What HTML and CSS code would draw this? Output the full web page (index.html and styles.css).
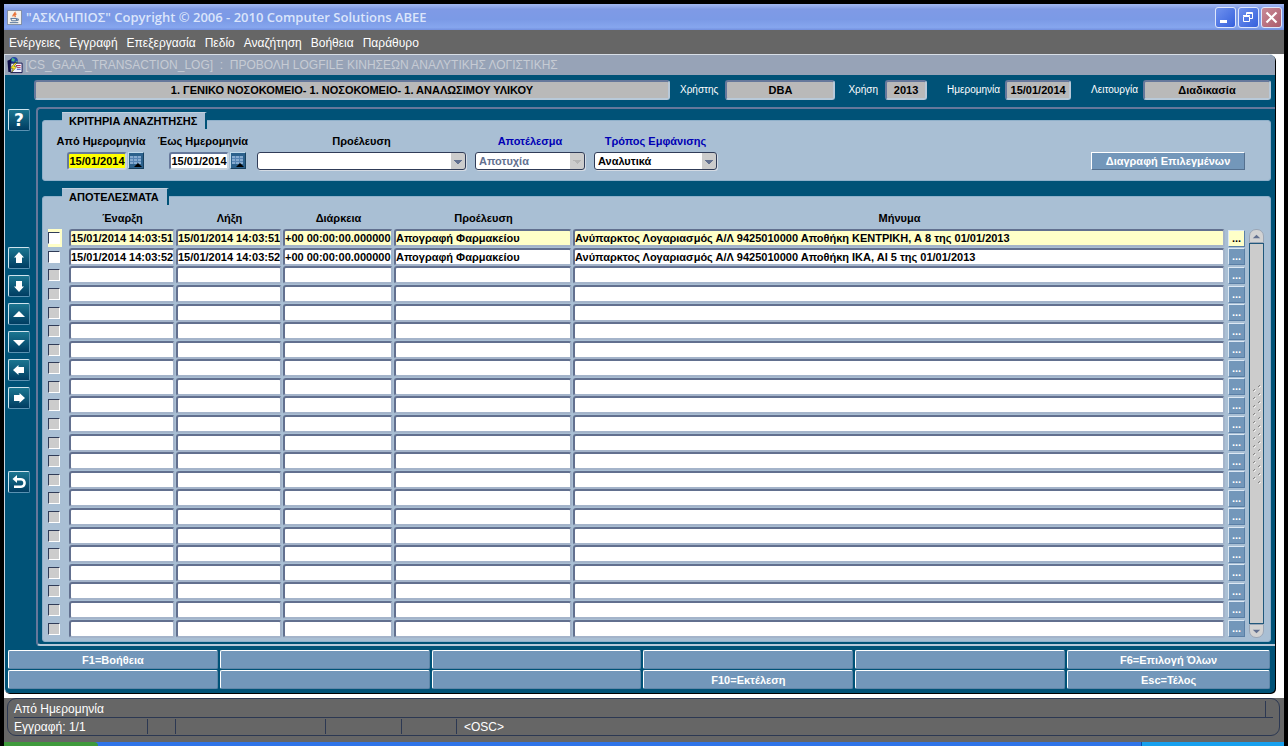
FILE: index.html
```
<!DOCTYPE html>
<html lang="el">
<head>
<meta charset="utf-8">
<title>ΑΣΚΛΗΠΙΟΣ</title>
<link rel="stylesheet" href="styles.css">
</head>
<body>
<div class="screen">
  <header class="titlebar">
    <svg class="app-icon" viewBox="0 0 16 16" aria-hidden="true">
      <rect width="16" height="16" rx="1" fill="#7d8aa0"/><rect x="1" y="1" width="14" height="14" fill="#f3f1ec"/>
      <path d="M8.500 2c1 2-3 2.600-2 5M10 4c-2 1-2 2-1 3.500" fill="none" stroke="#e8743a" stroke-width="1.500"/>
      <path d="M4 9h6v2.500H5zM10 9.500h2v1.500h-2" fill="none" stroke="#4d6d96"/><path d="M3 13.500h9" stroke="#4d6d96"/>
    </svg>
    <h1 class="title">"ΑΣΚΛΗΠΙΟΣ" Copyright © 2006 - 2010 Computer Solutions ΑΒΕΕ</h1>
    <div class="window-buttons">
      <button class="win-btn" aria-label="Minimize"><svg viewBox="0 0 19 19"><path d="M4 12h7v3H4z" fill="#fff"/></svg></button>
      <button class="win-btn" aria-label="Restore"><svg viewBox="0 0 19 19" fill="none" stroke="#fff"><path d="M4.500 8.500h6v5h-6zM4 7.500h7M7.500 7V4.500h6v6H11M7 5.500h7"/></svg></button>
      <button class="win-btn win-close" aria-label="Close"><svg viewBox="0 0 19 19"><path d="M4.500 4.500l10 10M14.500 4.500l-10 10" stroke="#fff" stroke-width="2.200"/></svg></button>
    </div>
  </header>
  <nav class="menubar">
    <button>Ενέργειες</button><button>Εγγραφή</button><button>Επεξεργασία</button><button>Πεδίο</button><button>Αναζήτηση</button><button>Βοήθεια</button><button>Παράθυρο</button>
  </nav>
  <div class="desk">
    <main class="form">
      <div class="form-title">
        <svg class="form-icon" viewBox="0 0 16 18" aria-hidden="true">
          <circle cx="7" cy="4" r="4" fill="#2448a8"/><path d="M5 1l3 1-1 3-3-1zM9 4l2 1-2 2z" fill="#49b884"/>
          <path d="M0 4l4-2v14H1z" fill="#10104a"/><path d="M3.500 6.500h12v10h-12z" fill="#f4f4ff" stroke="#10104a"/>
          <path d="M9 9h5M10 11h4" stroke="#b02850"/><path d="M10 13h4" stroke="#2840b0"/>
          <path d="M8 6L3 12h3l-2 5 6-7H7l3-4z" fill="#ffe820" stroke="#202020" stroke-width=".5"/>
        </svg>
        <h2 class="form-name">[CS_GAAA_TRANSACTION_LOG] &nbsp;:&nbsp; ΠΡΟΒΟΛΗ LOGFILE ΚΙΝΗΣΕΩΝ ΑΝΑΛΥΤΙΚΗΣ ΛΟΓΙΣΤΙΚΗΣ</h2>
      </div>
      <div class="context">
        <output class="ctx-box ctx-unit">1. ΓΕΝΙΚΟ ΝΟΣΟΚΟΜΕΙΟ- 1. ΝΟΣΟΚΟΜΕΙΟ- 1. ΑΝΑΛΩΣΙΜΟΥ ΥΛΙΚΟΥ</output>
        <label class="ctx-label" for="user">Χρήστης</label><output id="user" class="ctx-box ctx-user">DBA</output>
        <label class="ctx-label ctx-gap" for="year">Χρήση</label><output id="year" class="ctx-box ctx-year">2013</output>
        <label class="ctx-label ctx-gap-wide" for="date">Ημερομηνία</label><output id="date" class="ctx-box ctx-date">15/01/2014</output>
        <label class="ctx-label ctx-gap-wide" for="mode">Λειτουργία</label><output id="mode" class="ctx-box ctx-mode">Διαδικασία</output>
      </div>
      <div class="workspace">
        <aside class="rail">
          <button class="rail-btn rail-help" aria-label="Βοήθεια">?</button>
          <div class="rail-group">
            <button class="rail-btn" aria-label="Πρώτη"><svg viewBox="0 0 20 20"><path d="M10 4l5 5.500h-2V15H7V9.500H5z"/></svg></button>
            <button class="rail-btn" aria-label="Τελευταία"><svg viewBox="0 0 20 20"><path d="M10 16l5-5.500h-2V5H7v5.500H5z"/></svg></button>
            <button class="rail-btn" aria-label="Πάνω"><svg viewBox="0 0 20 20"><path d="M10 7l6 6H4z"/></svg></button>
            <button class="rail-btn" aria-label="Κάτω"><svg viewBox="0 0 20 20"><path d="M10 14l6-6H4z"/></svg></button>
            <button class="rail-btn" aria-label="Αριστερά"><svg viewBox="0 0 20 20"><path d="M4 10l5.500-5v2H15v6H9.500v2z"/></svg></button>
            <button class="rail-btn" aria-label="Δεξιά"><svg viewBox="0 0 20 20"><path d="M16 10l-5.500-5v2H5v6h5.500v2z"/></svg></button>
          </div>
          <button class="rail-btn" aria-label="Επιστροφή"><svg viewBox="0 0 20 20"><path d="M3.500 7L8 3v3h4c6.500 0 6.500 10 0 10H5v-2.500h7c3 0 3-5 0-5H8V11z"/></svg></button>
        </aside>
        <div class="canvas">
          <section class="panel criteria">
            <h3 class="tab tab-criteria">ΚΡΙΤΗΡΙΑ ΑΝΑΖΗΤΗΣΗΣ</h3>
            <div class="fields">
              <div class="field field-date"><label for="from">Από Ημερομηνία</label><div class="date-row"><input id="from" class="date active" value="15/01/2014"><button class="cal" aria-label="Ημερολόγιο"><svg viewBox="0 0 14 14"><path d="M1 2h11v8H1z" fill="#86abd0"/><path d="M1 4.500h11M1 7.500h11M4.500 2v8M8.500 2v8" stroke="#5684b4"/><path d="M5 13l4-4 4 4z" fill="#000"/></svg></button></div></div>
              <div class="field field-date"><label for="to">Έως Ημερομηνία</label><div class="date-row"><input id="to" class="date" value="15/01/2014"><button class="cal" aria-label="Ημερολόγιο"><svg viewBox="0 0 14 14"><path d="M1 2h11v8H1z" fill="#86abd0"/><path d="M1 4.500h11M1 7.500h11M4.500 2v8M8.500 2v8" stroke="#5684b4"/><path d="M5 13l4-4 4 4z" fill="#000"/></svg></button></div></div>
              <div class="field field-origin"><label for="origin">Προέλευση</label><select id="origin" class="combo"><option></option></select></div>
              <div class="field field-result"><label class="blue" for="result">Αποτέλεσμα</label><select id="result" class="combo" disabled><option>Αποτυχία</option></select></div>
              <div class="field field-view"><label class="blue" for="view">Τρόπος Εμφάνισης</label><select id="view" class="combo"><option>Αναλυτικά</option></select></div>
              <button class="delete">Διαγραφή Επιλεγμένων</button>
            </div>
          </section>
          <section class="panel results">
            <h3 class="tab tab-results">ΑΠΟΤΕΛΕΣΜΑΤΑ</h3>
            <div class="results-body">
              <table class="grid">
                <colgroup><col class="c-check"><col class="c-start"><col class="c-end"><col class="c-span"><col class="c-origin"><col><col class="c-more"></colgroup>
                <thead><tr><td></td><th>Έναρξη</th><th>Λήξη</th><th>Διάρκεια</th><th>Προέλευση</th><th>Μήνυμα</th><td></td></tr></thead>
                <tbody id="rows"></tbody>
              </table>
              <div class="scroll" aria-hidden="true">
                <span class="scroll-end scroll-up"><svg viewBox="0 0 14 13"><path d="M3 9l4-4 4 4z" fill="#62708f"/></svg></span>
                <span class="scroll-thumb"><svg class="grip" viewBox="0 0 8 100"><defs><pattern id="dash" width="8" height="8" patternUnits="userSpaceOnUse"><path d="M5 3l2-2M0 7l2-2" stroke="#858585"/><path d="M6 4l2-2M1 8l2-2" stroke="#f0f0f0"/></pattern></defs><rect width="8" height="100" fill="url(#dash)"/></svg></span>
                <span class="scroll-end scroll-down"><svg viewBox="0 0 14 13"><path d="M3 5l4 4 4-4z" fill="#62708f"/></svg></span>
              </div>
            </div>
          </section>
        </div>
      </div>
      <div class="keys">
        <button>F1=Βοήθεια</button><button></button><button></button><button></button><button></button><button>F6=Επιλογή Όλων</button>
        <button></button><button></button><button></button><button>F10=Εκτέλεση</button><button></button><button>Esc=Τέλος</button>
      </div>
    </main>
  </div>
  <footer class="status">
    <div class="status-box">
      <div class="status-line"><span class="hint">Από Ημερομηνία</span></div>
      <div class="status-cells"><span class="s-record">Εγγραφή: 1/1</span><span class="s-a"></span><span class="s-b"></span><span class="s-c"></span><span class="s-d"></span><span class="s-osc">&lt;OSC&gt;</span></div>
    </div>
  </footer>
  <div class="taskbar"><span class="start"></span><span class="tasks"></span><span class="tray"></span></div>
</div>
<script src="rows.js"></script>
</body>
</html>
```
FILE: styles.css
```
* { box-sizing: border-box; }
body { margin: 0; background: #000; font: bold 11px/14px "Liberation Sans", "DejaVu Sans", sans-serif; color: #000; }
h1, h2, h3 { margin: 0; font: inherit; }
button, input, select { font: inherit; margin: 0; padding: 0; border-radius: 0; }
svg { display: block; }
.screen { min-height: 100vh; padding: 4px 4px 0; display: flex; flex-direction: column; }

.titlebar { height: 26px; display: flex; align-items: center; gap: 4px; padding: 0 2px 0 3px; background: linear-gradient(#a3b9f2, #7f9ae6 20%, #7b9ae6 60%, #86a6ee 90%, #7390de); }
.app-icon { width: 15px; height: 15px; }
.title { flex: 1; color: #dbe5fb; font: 600 13px/18px "Open Sans", sans-serif; }
.window-buttons { display: flex; gap: 2px; }
.win-btn { width: 21px; height: 21px; border: 1px solid #dfe7fb; border-radius: 3px; background: linear-gradient(135deg, #7092ee, #3560dc); }
.win-btn svg { width: 19px; height: 19px; }
.win-close { background: linear-gradient(135deg, #c98a97, #ab5c6c); }

.menubar { height: 24px; display: flex; align-items: center; gap: 9px; padding: 2px 5px 0; background: #666; }
.menubar button { border: 0; background: none; color: #fff; font: 12px/16px "Liberation Sans", sans-serif; }

.desk { flex: 1; display: flex; background: #fff; padding: 0 9px 5px 0; }
.form { flex: 1; display: flex; flex-direction: column; background: #005277; border-left: 1px solid #c8d4e0; border-top: 1px solid #d8dee6; border-radius: 0 6px 5px 5px; box-shadow: 1px 1px 0 #000; min-width: 0; }
.form-title { height: 20px; display: flex; align-items: center; gap: 2px; padding-left: 2px; background: #97a3b7; border-radius: 0 5px 0 0; }
.form-icon { width: 16px; height: 17px; }
.form-name { color: #c6cbd4; font: 12px/16px "Liberation Sans", sans-serif; }

.context { display: flex; align-items: center; padding: 5px 4px 5px 29px; }
.ctx-box { height: 20px; border: 2px solid; border-color: #66789b #b8c9d9 #b8c9d9 #66789b; border-radius: 3px; background: #b9b9b9; text-align: center; line-height: 16px; }
.ctx-unit { flex: 1; }
.ctx-label { color: #fff; font-weight: normal; font-size: 10px; padding: 0 7px 0 10px; }
.ctx-gap { padding-left: 13px; }
.ctx-gap-wide { padding-left: 20px; padding-right: 5px; }
.ctx-user { width: 110px; }
.ctx-year { width: 42px; }
.ctx-date { width: 66px; }
.ctx-mode { width: 128px; }

.workspace { flex: 1; display: flex; min-height: 0; }
.rail { width: 31px; display: flex; flex-direction: column; padding: 4px 0 0 3px; }
.rail-btn { width: 22px; height: 22px; border: 1px solid; border-color: #cfe4ee #5a92b2 #5a92b2 #cfe4ee; border-radius: 2px; background: linear-gradient(#1b7590, #003d62); color: #fff; }
.rail-btn svg { width: 20px; height: 20px; fill: #fff; }
.rail-help { font-family: "DejaVu Sans", sans-serif; font-size: 17px; line-height: 20px; }
.rail-group { display: flex; flex-direction: column; gap: 6px; margin: 116px 0 62px; }
.canvas { flex: 1; min-width: 0; display: flex; flex-direction: column; gap: 15px; padding: 11px 4px 2px 4px; margin-top: 2px; border: 2px solid #66789b; border-right: 0; border-bottom-color: #b8c9d9; border-radius: 4px 0 0 4px; }
.panel { background: #a9bfd4; border-radius: 3px; border: 1px solid #8fb0ca; padding: 0 3px; }
.tab { width: max-content; margin: -9px 0 0 16px; padding: 1px 8px 0 7px; background: #a9bfd4; border-top: 1px solid #c3d0df; border-right: 2px solid #005277; line-height: 15px; }
.criteria { height: 61px; }
.fields { display: flex; align-items: flex-end; padding: 5px 0 0 4px; }
.field { display: flex; flex-direction: column; align-items: center; gap: 3px; }
.field label { line-height: 15px; }
.field .blue { color: #0000b4; }
.field-date { width: 102px; }
.date-row { display: flex; gap: 1px; padding-left: 9px; }
.date { width: 60px; height: 18px; border: 2px solid; border-color: #66789b #c8d4e0 #c8d4e0 #66789b; border-radius: 3px; background: #fff; text-align: center; outline: 0; }
.date.active { background: #ff0; }
.cal { width: 16px; height: 17px; border: 1px solid; border-color: #c4dcec #17405f #17405f #c4dcec; background: #2c618c; }
.cal svg { width: 14px; height: 14px; }
.combo { width: 100%; height: 18px; appearance: none; border: 1px solid #303c58; border-radius: 3px; box-shadow: 1px 1px 0 #d4dbe4; padding: 0 3px; color: #000; background: conic-gradient(from -45deg at 50% 100%, #62708f 90deg, transparent 0) no-repeat right 3px top 7px / 8px 4px, linear-gradient(#ccc, #ccc) no-repeat right / 14px 100%, #fff; background: linear-gradient(45deg, transparent 50%, #62708f 50%) no-repeat right 7px top 7px / 4px 4px, linear-gradient(-45deg, transparent 50%, #62708f 50%) no-repeat right 3px top 7px / 4px 4px, linear-gradient(#ccc, #ccc) no-repeat right / 14px 100%, #fff; }
.combo:disabled { color: #62708f; opacity: 1; background: linear-gradient(45deg, transparent 50%, #b4b4b4 50%) no-repeat right 7px top 7px / 4px 4px, linear-gradient(-45deg, transparent 50%, #b4b4b4 50%) no-repeat right 3px top 7px / 4px 4px, linear-gradient(#ccc, #ccc) no-repeat right / 14px 100%, #fff; }
.field-origin { width: 209px; margin-left: 3px; }
.field-result { width: 110px; margin-left: 9px; }
.field-view { width: 123px; margin-left: 9px; }
.delete { margin-left: auto; margin-right: 22px; width: 154px; height: 18px; color: #fff; background: #7397ba; border: 1px solid; border-color: #fff #55708f #55708f #fff; line-height: 14px; }

.results { flex: 1; display: flex; flex-direction: column; }
.results-body { flex: 1; display: flex; gap: 4px; padding: 4px 3px 3px 2px; }
.grid { flex: 1; table-layout: fixed; border-collapse: collapse; width: 100%; height: 429px; }
.grid th, .grid td { padding: 0; font: inherit; }
.grid thead tr { height: 20px; }
.grid thead th { padding-bottom: 2px; }
.c-check { width: 21px; }
.c-start, .c-end { width: 107px; }
.c-span { width: 111px; }
.c-origin { width: 179px; }
.c-more { width: 19px; }
.cell { display: block; width: calc(100% - 1px); height: 18px; border: 2px solid; border-color: #62708f #a4b4ca #a4b4ca #62708f; border-radius: 3px; background: #fff; padding: 0; outline: 0; }
.current .cell { background: #ffffc8; }
.pick { appearance: none; display: block; width: 12px; height: 12px; border: 1px solid; border-color: #303c58 #fff #fff #303c58; background: #ccc; }
.filled .pick { background: #fff; }
.pick-wrap { display: flex; align-items: center; width: 14px; height: 18px; }
.current .pick-wrap { background: #ffffc8; }
.more { display: block; width: 17px; height: 17px; margin-left: auto; border: 1px solid; border-color: #dce8f4 #5a7fa6 #5a7fa6 #dce8f4; background: #7397ba; color: #fff; line-height: 15px; }
.current .more { background: #ffffc8; color: #000; }
.scroll { width: 15px; margin-top: 20px; display: flex; flex-direction: column; }
.scroll-end { height: 14px; background: #d3d3d3; border: 1px solid #9aa6b6; }
.scroll-up { border-radius: 7px 7px 0 0; }
.scroll-down { border-radius: 0 0 7px 7px; }
.scroll-thumb { flex: 1; display: flex; align-items: center; justify-content: center; background: #ccc; border: 1px solid #21587c; }
.grip { width: 8px; height: 100px; }

.keys { display: grid; grid-template-columns: repeat(5, 210fr) 203fr; grid-auto-rows: 19px; gap: 1px 2px; padding: 4px 5px 4px 3px; }
.keys button { border: 1px solid; border-color: #fff #5f86a8 #5f86a8 #fff; border-radius: 2px; background: #7397ba; color: #fff; }

.status { background: #666; padding: 0 4px 6px 3px; color: #fff; font: 12px/16px "Liberation Sans", sans-serif; }
.status-box { border: 1px solid #2c3852; border-radius: 9px; padding: 0 6px; }
.status-line { height: 19px; display: flex; padding-top: 2px; border-bottom: 1px solid #2c3852; }
.hint { flex: 1; margin-right: 7px; border-right: 1px solid #2c3852; }
.status-cells { display: flex; padding: 1px 0; height: 17px; }
.status-cells span { border-right: 1px solid #2c3852; }
.s-record { width: 134px; }
.s-a { width: 28px; }
.s-b { width: 150px; }
.s-c { width: 76px; }
.s-d { width: 55px; }
.status-cells .s-osc { border: 0; padding-left: 7px; }
.taskbar { height: 4px; display: flex; background: #2f74e8; }
.start { width: 94px; background: #3f9a3c; border-radius: 0 4px 0 0; }
.tasks { flex: 1; }
.tray { width: 143px; background: #17a0ee; border-left: 1px solid #0d4fa8; }
```
FILE: rows.js
```
const records = [
  ["15/01/2014 14:03:51", "15/01/2014 14:03:51", "+00 00:00:00.000000", "Απογραφή Φαρμακείου", "Ανύπαρκτος Λογαριασμός Α/Λ 9425010000 Αποθήκη ΚΕΝΤΡΙΚΗ, Α 8 της 01/01/2013"],
  ["15/01/2014 14:03:52", "15/01/2014 14:03:52", "+00 00:00:00.000000", "Απογραφή Φαρμακείου", "Ανύπαρκτος Λογαριασμός Α/Λ 9425010000 Αποθήκη ΙΚΑ, ΑΙ 5 της 01/01/2013"]
];
const names = ["Έναρξη", "Λήξη", "Διάρκεια", "Προέλευση", "Μήνυμα"];
const body = document.getElementById("rows");
for (let i = 0; i < 22; i++) {
  const values = records[i] || ["", "", "", "", ""];
  const row = document.createElement("tr");
  if (i < records.length) row.classList.add("filled");
  if (i === 0) row.classList.add("current");
  row.innerHTML = '<td><label class="pick-wrap"><input type="checkbox" class="pick" aria-label="Επιλογή"></label></td>' +
    values.map((v, k) => `<td><input class="cell" aria-label="${names[k]}" value="${v}"></td>`).join("") +
    '<td><button class="more">...</button></td>';
  body.append(row);
}
```
